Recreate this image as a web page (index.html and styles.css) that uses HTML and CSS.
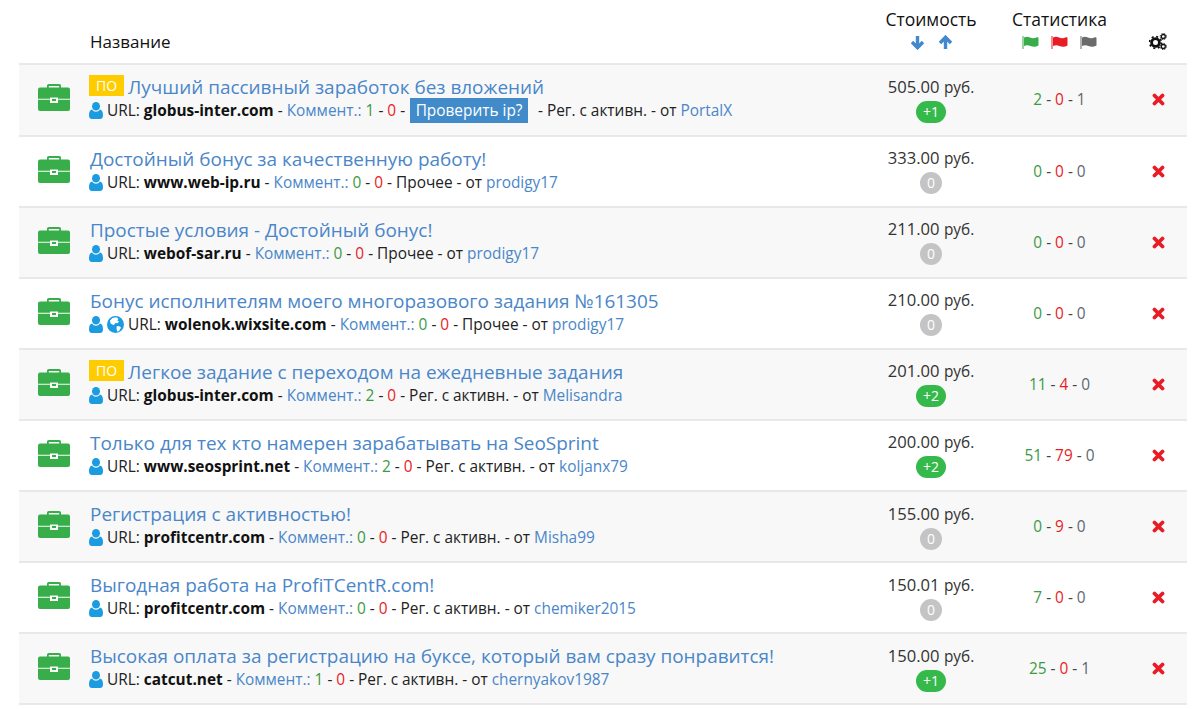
FILE: index.html
```html
<!DOCTYPE html>
<html lang="ru">
<head>
<meta charset="utf-8">
<title>Задания</title>
<link rel="stylesheet" href="styles.css">
</head>
<body>
<svg class="defs" width="0" height="0" aria-hidden="true">
  <symbol id="case" viewBox="0 0 32 27">
    <path d="M9 4.500V1.800C9 .7 9.800 0 10.800 0h10.400C22.200 0 23 .7 23 1.800v2.700h-1.800V2H10.800v2.500z" fill="#37ae49"/>
    <path d="M2 3.500h28a2 2 0 0 1 2 2v9.300H20v-1.300h-8v1.300H0V5.500a2 2 0 0 1 2-2z" fill="#37ae49"/>
    <path d="M0 15.700h12V19h8v-3.300h12V25a2 2 0 0 1-2 2H2a2 2 0 0 1-2-2z" fill="#37ae49"/>
    <path d="M14 15h4v2h-4z" fill="#37ae49"/>
  </symbol>
  <symbol id="user" viewBox="0 0 14 17">
    <ellipse cx="7" cy="4.300" rx="4" ry="4.300" fill="#1b9be0"/>
    <path d="M3.200 7.600C4 9 5.400 9.800 7 9.800s3-.8 3.800-2.200C13 7.900 14 10 14 13.500c0 2-1.100 3.500-2.800 3.500H2.800C1.100 17 0 15.500 0 13.500 0 10 1 7.900 3.200 7.600z" fill="#1b9be0"/>
  </symbol>
  <symbol id="globe" viewBox="0 0 17 17">
    <circle cx="8.500" cy="8.500" r="8.500" fill="#1b9be0"/>
    <path d="M5.500 2l3.700-.7 2.300 1.500-1.200 1.800 1.700 1-1.400 1.700-2.300-.2-1.500 2.200-3.300-1.800L3 4.500zM9.800 10l3.200.4 1 1.300-1.800 3-1.900 1-.8-3.200z" fill="#fff"/>
  </symbol>
  <symbol id="down" viewBox="0 0 15 15">
    <path d="M7.500 1V12M2 7l5.500 5.700L13 7" fill="none" stroke="#4288cd" stroke-width="3.400"/>
  </symbol>
  <symbol id="up" viewBox="0 0 15 15">
    <path d="M7.500 14V3M2 8l5.500-5.700L13 8" fill="none" stroke="#4288cd" stroke-width="3.400"/>
  </symbol>
  <symbol id="flag" viewBox="0 0 17 13">
    <path d="M.5 0h1v13h-1z"/>
    <path d="M2 1.500c2-1 4-1 6 0s4.500 1 7-.2c1-.4 1.500 0 1.500.7v7.500c-2.500 1.400-5.500 1.500-8 .5s-4.500-.8-6.500 0z"/>
  </symbol>
  <symbol id="gears" viewBox="0 0 18 17">
    <circle cx="6.500" cy="9.500" r="3.900" fill="none" stroke="#111" stroke-width="2.800"/>
    <circle cx="6.500" cy="9.500" r="5.900" fill="none" stroke="#111" stroke-width="1.800" stroke-dasharray="2 2.630"/>
    <circle cx="14.300" cy="3.500" r="2" fill="none" stroke="#111" stroke-width="1.300"/>
    <circle cx="14.300" cy="3.500" r="3.100" fill="none" stroke="#111" stroke-width="1" stroke-dasharray="1.200 1.230"/>
    <circle cx="14.300" cy="13.500" r="2" fill="none" stroke="#111" stroke-width="1.300"/>
    <circle cx="14.300" cy="13.500" r="3.100" fill="none" stroke="#111" stroke-width="1" stroke-dasharray="1.200 1.230"/>
  </symbol>
  <symbol id="cross" viewBox="0 0 13 13">
    <path d="M2.500 2.500l8 8M10.500 2.500l-8 8" fill="none" stroke="#e81c24" stroke-width="3.800" stroke-linecap="round"/>
  </symbol>
</svg>
<table class="tasks">
  <thead>
    <tr>
      <th class="c-icon"></th>
      <th class="c-title head-name">Название</th>
      <th class="c-cost"><div class="head-label">Стоимость</div><div class="head-icons"><svg class="arrow"><use href="#down"/></svg><svg class="arrow"><use href="#up"/></svg></div></th>
      <th class="c-stat"><div class="head-label">Статистика</div><div class="head-icons flags"><svg class="flag f-green"><use href="#flag"/></svg><svg class="flag f-red"><use href="#flag"/></svg><svg class="flag f-gray"><use href="#flag"/></svg></div></th>
      <th class="c-act"><svg class="gears"><use href="#gears"/></svg></th>
    </tr>
  </thead>
  <tbody>
    <tr>
      <td class="c-icon"><svg class="case"><use href="#case"/></svg></td>
      <td class="c-title">
        <div class="title"><span class="tag">ПО</span> <a>Лучший пассивный заработок без вложений</a></div>
        <div class="meta"><svg class="user"><use href="#user"/></svg> URL: <b>globus-inter.com</b> - <a>Коммент.:</a> <i class="g">1</i> - <i class="r">0</i> - <span class="check">Проверить ip?</span> <span class="after">- Рег. с активн. - от <a>PortalX</a></span></div>
      </td>
      <td class="c-cost"><div>505.00 <span>руб.</span></div><span class="pill plus">+1</span></td>
      <td class="c-stat"><i class="g">2</i> - <i class="r">0</i> - <i class="n">1</i></td>
      <td class="c-act"><svg class="cross"><use href="#cross"/></svg></td>
    </tr>
    <tr>
      <td class="c-icon"><svg class="case"><use href="#case"/></svg></td>
      <td class="c-title">
        <div class="title plain"><a>Достойный бонус за качественную работу!</a></div>
        <div class="meta"><svg class="user"><use href="#user"/></svg> URL: <b>www.web-ip.ru</b> - <a>Коммент.:</a> <i class="g">0</i> - <i class="r">0</i> - Прочее - от <a>prodigy17</a></div>
      </td>
      <td class="c-cost"><div>333.00 <span>руб.</span></div><span class="pill zero">0</span></td>
      <td class="c-stat"><i class="g">0</i> - <i class="r">0</i> - <i class="n">0</i></td>
      <td class="c-act"><svg class="cross"><use href="#cross"/></svg></td>
    </tr>
    <tr>
      <td class="c-icon"><svg class="case"><use href="#case"/></svg></td>
      <td class="c-title">
        <div class="title plain"><a>Простые условия - Достойный бонус!</a></div>
        <div class="meta"><svg class="user"><use href="#user"/></svg> URL: <b>webof-sar.ru</b> - <a>Коммент.:</a> <i class="g">0</i> - <i class="r">0</i> - Прочее - от <a>prodigy17</a></div>
      </td>
      <td class="c-cost"><div>211.00 <span>руб.</span></div><span class="pill zero">0</span></td>
      <td class="c-stat"><i class="g">0</i> - <i class="r">0</i> - <i class="n">0</i></td>
      <td class="c-act"><svg class="cross"><use href="#cross"/></svg></td>
    </tr>
    <tr>
      <td class="c-icon"><svg class="case"><use href="#case"/></svg></td>
      <td class="c-title">
        <div class="title plain"><a>Бонус исполнителям моего многоразового задания №161305</a></div>
        <div class="meta"><svg class="user"><use href="#user"/></svg> <svg class="globe"><use href="#globe"/></svg> URL: <b>wolenok.wixsite.com</b> - <a>Коммент.:</a> <i class="g">0</i> - <i class="r">0</i> - Прочее - от <a>prodigy17</a></div>
      </td>
      <td class="c-cost"><div>210.00 <span>руб.</span></div><span class="pill zero">0</span></td>
      <td class="c-stat"><i class="g">0</i> - <i class="r">0</i> - <i class="n">0</i></td>
      <td class="c-act"><svg class="cross"><use href="#cross"/></svg></td>
    </tr>
    <tr>
      <td class="c-icon"><svg class="case"><use href="#case"/></svg></td>
      <td class="c-title">
        <div class="title"><span class="tag">ПО</span> <a>Легкое задание с переходом на ежедневные задания</a></div>
        <div class="meta"><svg class="user"><use href="#user"/></svg> URL: <b>globus-inter.com</b> - <a>Коммент.:</a> <i class="g">2</i> - <i class="r">0</i> - Рег. с активн. - от <a>Melisandra</a></div>
      </td>
      <td class="c-cost"><div>201.00 <span>руб.</span></div><span class="pill plus">+2</span></td>
      <td class="c-stat"><i class="g">11</i> - <i class="r">4</i> - <i class="n">0</i></td>
      <td class="c-act"><svg class="cross"><use href="#cross"/></svg></td>
    </tr>
    <tr>
      <td class="c-icon"><svg class="case"><use href="#case"/></svg></td>
      <td class="c-title">
        <div class="title plain"><a>Только для тех кто намерен зарабатывать на SeoSprint</a></div>
        <div class="meta"><svg class="user"><use href="#user"/></svg> URL: <b>www.seosprint.net</b> - <a>Коммент.:</a> <i class="g">2</i> - <i class="r">0</i> - Рег. с активн. - от <a>koljanx79</a></div>
      </td>
      <td class="c-cost"><div>200.00 <span>руб.</span></div><span class="pill plus">+2</span></td>
      <td class="c-stat"><i class="g">51</i> - <i class="r">79</i> - <i class="n">0</i></td>
      <td class="c-act"><svg class="cross"><use href="#cross"/></svg></td>
    </tr>
    <tr>
      <td class="c-icon"><svg class="case"><use href="#case"/></svg></td>
      <td class="c-title">
        <div class="title plain"><a>Регистрация с активностью!</a></div>
        <div class="meta"><svg class="user"><use href="#user"/></svg> URL: <b>profitcentr.com</b> - <a>Коммент.:</a> <i class="g">0</i> - <i class="r">0</i> - Рег. с активн. - от <a>Misha99</a></div>
      </td>
      <td class="c-cost"><div>155.00 <span>руб.</span></div><span class="pill zero">0</span></td>
      <td class="c-stat"><i class="g">0</i> - <i class="r">9</i> - <i class="n">0</i></td>
      <td class="c-act"><svg class="cross"><use href="#cross"/></svg></td>
    </tr>
    <tr>
      <td class="c-icon"><svg class="case"><use href="#case"/></svg></td>
      <td class="c-title">
        <div class="title plain"><a>Выгодная работа на ProfiTCentR.com!</a></div>
        <div class="meta"><svg class="user"><use href="#user"/></svg> URL: <b>profitcentr.com</b> - <a>Коммент.:</a> <i class="g">0</i> - <i class="r">0</i> - Рег. с активн. - от <a>chemiker2015</a></div>
      </td>
      <td class="c-cost"><div>150.01 <span>руб.</span></div><span class="pill zero">0</span></td>
      <td class="c-stat"><i class="g">7</i> - <i class="r">0</i> - <i class="n">0</i></td>
      <td class="c-act"><svg class="cross"><use href="#cross"/></svg></td>
    </tr>
    <tr>
      <td class="c-icon"><svg class="case"><use href="#case"/></svg></td>
      <td class="c-title">
        <div class="title plain"><a>Высокая оплата за регистрацию на буксе, который вам сразу понравится!</a></div>
        <div class="meta"><svg class="user"><use href="#user"/></svg> URL: <b>catcut.net</b> - <a>Коммент.:</a> <i class="g">1</i> - <i class="r">0</i> - Рег. с активн. - от <a>chernyakov1987</a></div>
      </td>
      <td class="c-cost"><div>150.00 <span>руб.</span></div><span class="pill plus">+1</span></td>
      <td class="c-stat"><i class="g">25</i> - <i class="r">0</i> - <i class="n">1</i></td>
      <td class="c-act"><svg class="cross"><use href="#cross"/></svg></td>
    </tr>
  </tbody>
</table>
</body>
</html>
```
FILE: styles.css
```css
html, body { margin: 0; background: #fff; overflow: hidden; }
body {
  padding: 0 13px 0 19px;
  font-family: "Open Sans", "Noto Sans", sans-serif;
  font-size: 15.4px;
  color: #222;
}
.defs { position: absolute; }
.tasks {
  width: 100%;
  table-layout: fixed;
  border-collapse: separate;
  border-spacing: 0;
  border-bottom: 2px solid #e8e8e8;
}
th {
  box-sizing: border-box;
  height: 63.4px;
  padding: 0;
  font-weight: 400;
  font-size: 17px;
  vertical-align: bottom;
  color: #111;
}
th.c-title { padding: 0 0 10px 1px; }
th.c-act { padding-bottom: 13px; }
th.c-cost, th.c-stat { padding-bottom: 10px; font-size: 17.5px; }
.c-icon { width: 70px; text-align: center; }
.c-title { text-align: left; }
.c-cost { width: 118px; text-align: center; }
.c-stat { width: 139px; text-align: center; }
.c-act { width: 58px; text-align: center; }
.head-label { line-height: 22px; margin-bottom: 1px; }
.head-icons { height: 22px; display: flex; justify-content: center; gap: 13px; align-items: center; }
.flags { gap: 12px; }
.arrow { width: 15px; height: 15px; }
.flag { width: 17px; height: 13px; }
.f-green { fill: #37ae49; }
.f-red { fill: #e81c24; }
.f-gray { fill: #6b6b6b; }
.gears { width: 18px; height: 17px; display: block; margin: 0 auto; }
td { height: 69.11px; padding: 0; border-top: 2px solid #e8e8e8; vertical-align: middle; }
tbody tr:nth-child(odd) td { background: #f8f8f8; }
.case { width: 32px; height: 27px; display: block; margin: 0 auto 4px; }
.title { font-size: 18.95px; line-height: 26px; white-space: nowrap; }
.plain { padding-left: 1px; }
a { color: #4a86c8; }
.tag {
  display: inline-block;
  background: #fc0;
  color: #fff;
  font-size: 14px;
  line-height: 21px;
  padding: 0 7px;
  margin-right: -1px;
  vertical-align: 3px;
}
.meta { font-size: 15.4px; line-height: 21px; white-space: nowrap; margin-bottom: 4px; }
.meta b { font-weight: 700; color: #111; }
i { font-style: normal; }
.g { color: #3c9a45; }
.r { color: #e81c24; }
.n { color: #5f6770; }
.user { width: 14px; height: 17px; vertical-align: -3px; }
.globe { width: 17px; height: 17px; vertical-align: -3px; }
.check { background: #428bca; color: #fff; padding: 2px 5.500px; margin: 0 6px 0 1px; }
td.c-cost div { font-size: 16.6px; line-height: 22px; color: #333; }
td.c-cost div span { font-size: 15.4px; }
.pill {
  display: inline-block;
  min-width: 8px;
  margin: 2px 0 1px;
  padding: 0 7px;
  height: 22px;
  line-height: 22px;
  border-radius: 11px;
  font-size: 14px;
  color: #fff;
}
.plus { background: #35b94b; }
.zero { background: #c4c4c4; }
td.c-stat { color: #444; }
.cross { width: 13px; height: 13px; display: block; margin: 0 auto; }
```
